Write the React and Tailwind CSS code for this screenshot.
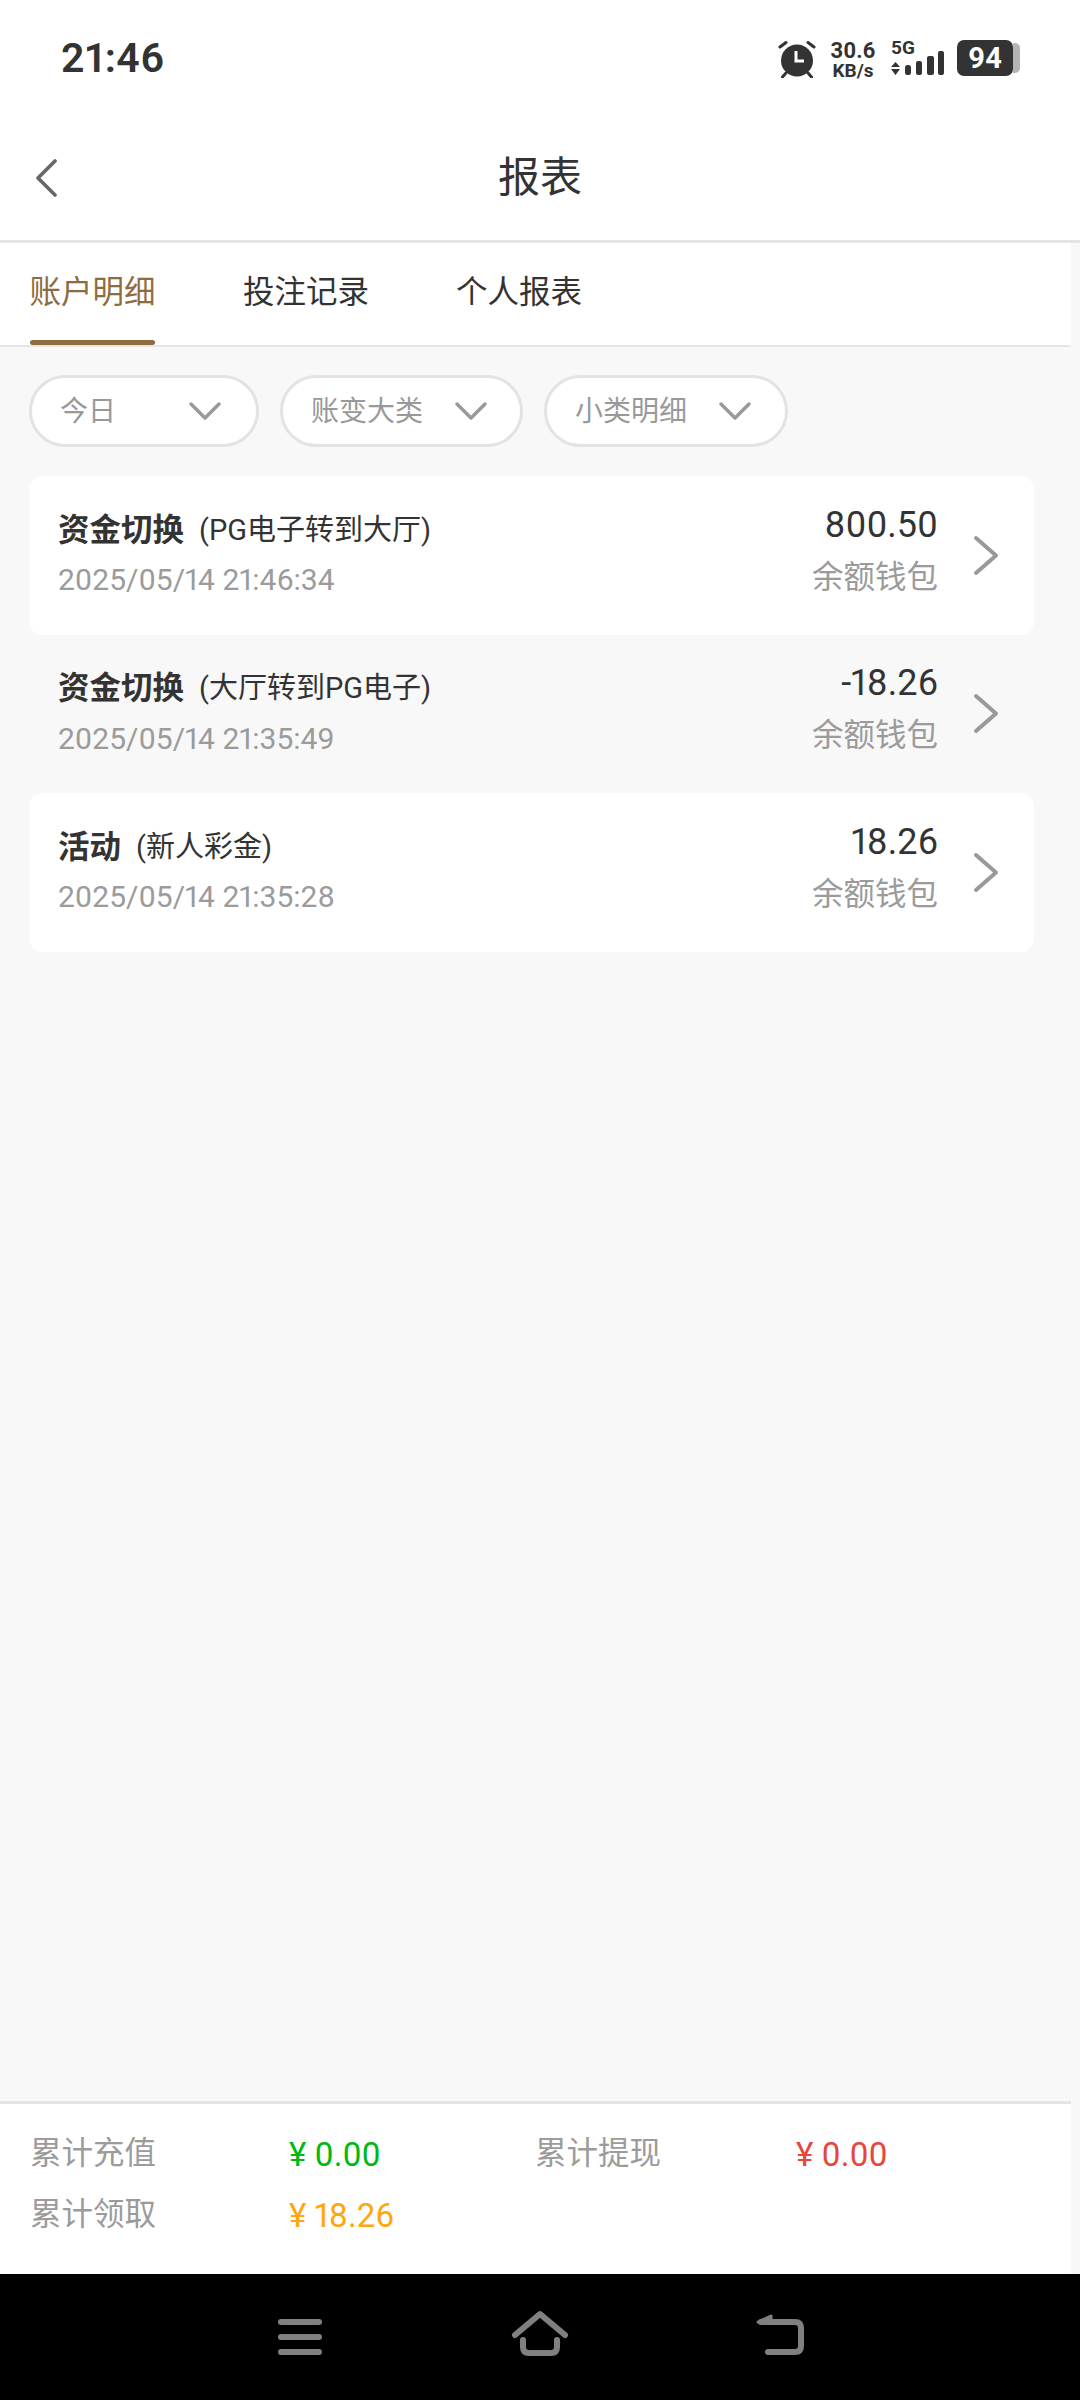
const FONT = "font-['Roboto','Noto_Sans_CJK_SC',sans-serif]";

function Chevron({ className }) {
  return (
    <svg viewBox="0 0 26 42" className={className} fill="none" stroke="#999999" strokeWidth="4" strokeLinecap="round" strokeLinejoin="round">
      <path d="M3 3 L23 20.5 L3 38" />
    </svg>
  );
}

function Chip({ label, width, gap }) {
  return (
    <div className={`flex h-[72px] items-center rounded-full border-[3px] border-[#e3e3e3] bg-white pl-[28px] ${width}`}>
      <span className="pt-[2px] text-[28px] leading-none text-[#999999]">{label}</span>
      <svg viewBox="0 0 32 20" className={`h-[20px] w-[32px] ${gap}`} fill="none" stroke="#999999" strokeWidth="3.4" strokeLinecap="round" strokeLinejoin="round">
        <path d="M2 3 L16 17 L30 3" />
      </svg>
    </div>
  );
}

function Row({ title, sub, time, amount, white }) {
  return (
    <div className={`flex h-[158.5px] items-center rounded-[14px] pl-[29px] pr-[35px] ${white ? "bg-white" : ""}`}>
      <div className="mb-[3px] flex-1">
        <div className="flex h-[40px] items-center text-[#333333]">
          <span className="text-[31.5px] font-bold leading-none">{title}</span>
          <span className="ml-[15px] text-[29px] leading-none">{sub}</span>
        </div>
        <div className="mt-[13px] text-[30px] leading-[34px] text-[#9b9b9b]">{time}</div>
      </div>
      <div className="mb-[10px] mr-[-1px] text-right">
        <div className="text-[36px] leading-[40px] text-[#333333]">{amount}</div>
        <div className="mt-[15px] text-[31.5px] leading-[36px] text-[#9b9b9b]">余额钱包</div>
      </div>
      <Chevron className="ml-[36px] mt-[1px] h-[42px] w-[26px]" />
    </div>
  );
}

function Sum({ color, value }) {
  return <span className={`ml-[1px] text-[33px] leading-none ${color}`}>¥ {value}</span>;
}

export default function App() {
  return (
    <div className={`proportional-nums flex h-[2400px] w-[1080px] flex-col bg-[#f8f8f8] ${FONT}`}>
      {/* status bar */}
      <div className="flex h-[116px] w-full items-start justify-between bg-white pl-[61px] pr-[60px] pt-[36px]">
        <span className="text-[41px] font-semibold leading-[44px] tracking-[0.5px] text-[#333333]">21:46</span>
        <div className="flex items-start pt-[4px]">
          <svg viewBox="0 0 38 38" className="h-[38px] w-[38px]" fill="#333333">
            <circle cx="19" cy="20.5" r="16" />
            <path d="M2 7 L8 2.5 M36 7 L30 2.5 M8 33 L4.5 37 M30 33 L33.5 37" stroke="#333333" strokeWidth="3" strokeLinecap="round" />
            <path d="M18 11 V21 H26" stroke="#ffffff" strokeWidth="3" fill="none" />
          </svg>
          <div className="ml-[13px] flex w-[48px] flex-col items-center font-bold leading-none text-[#333333]">
            <span className="text-[22px] leading-[21px]">30.6</span>
            <span className="text-[19px] leading-[19px]">KB/s</span>
          </div>
          <div className="ml-[14px] flex w-[54px] flex-col">
            <span className="text-[19px] font-bold leading-[16px] text-[#333333]">5G</span>
            <svg viewBox="0 0 53 24" className="mt-[-5px] h-[24px] w-[53px]" fill="#333333">
              <path d="M4.5 11 L9 16 H0 Z M4.5 24 L9 18 H0 Z" />
              <rect x="14" y="14" width="6" height="10" rx="2.5" />
              <rect x="25" y="10" width="6" height="14" rx="2" />
              <rect x="36" y="5" width="7" height="19" rx="2" />
              <rect x="47" y="0" width="6" height="24" rx="2" />
            </svg>
          </div>
          <div className="ml-[12px] flex items-center">
            <div className="flex h-[36px] w-[56px] items-center justify-center rounded-[7px] bg-[#333333] text-[29px] font-bold leading-none text-white">94</div>
            <div className="h-[30px] w-[7px] rounded-r-[5px] bg-[#b5b5b5]" />
          </div>
        </div>
      </div>

      {/* header */}
      <div className="relative flex h-[124px] w-full items-center justify-center bg-white">
        <svg viewBox="0 0 24 38" className="absolute left-[35px] top-[43px] h-[38px] w-[24px]" fill="none" stroke="#666666" strokeWidth="3.6" strokeLinecap="round" strokeLinejoin="round">
          <path d="M20 2 L3 19 L20 36" />
        </svg>
        <span className="text-[42px] leading-none text-[#333333]">报表</span>
      </div>
      <div className="h-[3px] w-full bg-[#e4e4e4]" />

      {/* tabs */}
      <div className="flex h-[102px] w-[1071px] shrink-0 items-stretch bg-white pl-[30px]">
        <div className="relative flex w-[125px] items-center justify-center pb-[3px] text-[31.5px] leading-none text-[#8f6c3f]">
          <span className="whitespace-nowrap">账户明细</span>
          <span className="absolute bottom-0 left-0 h-[5px] w-[125px] rounded-full bg-[#8f6c3f]" />
        </div>
        <div className="ml-[88px] flex items-center pb-[3px] text-[31.5px] leading-none text-[#333333]">投注记录</div>
        <div className="ml-[87px] flex items-center pb-[3px] text-[31.5px] leading-none text-[#333333]">个人报表</div>
      </div>
      <div className="h-[2px] w-[1071px] bg-[#e6e6e6]" />

      {/* filters */}
      <div className="flex gap-[21px] pl-[29px] pt-[28px]">
        <Chip label="今日" width="w-[230px]" gap="ml-[73px]" />
        <Chip label="账变大类" width="w-[243px]" gap="ml-[32px]" />
        <Chip label="小类明细" width="w-[244px]" gap="ml-[32px]" />
      </div>

      {/* list */}
      <div className="mt-[29px] flex w-[1034px] flex-col pl-[29px]">
        <Row white title="资金切换" sub="(PG电子转到大厅)" time="2025/05/14 21:46:34" amount="800.50" />
        <Row title="资金切换" sub="(大厅转到PG电子)" time="2025/05/14 21:35:49" amount="-18.26" />
        <Row white title="活动" sub="(新人彩金)" time="2025/05/14 21:35:28" amount="18.26" />
      </div>

      <div className="flex-1" />

      {/* footer */}
      <div className="h-[3px] w-[1071px] bg-[#e4e4e4]" />
      <div className="grid h-[170px] w-[1071px] grid-cols-[258px_247px_260px_1fr] content-start gap-y-[19px] bg-white pl-[30px] pt-[29px]">
        <span className="text-[31.5px] leading-[42px] text-[#9b9b9b]">累计充值</span>
        <div className="flex items-center"><Sum color="text-[#00b80f]" value="0.00" /></div>
        <span className="text-[31.5px] leading-[42px] text-[#9b9b9b]">累计提现</span>
        <div className="flex items-center"><Sum color="text-[#e8453c]" value="0.00" /></div>
        <span className="text-[31.5px] leading-[42px] text-[#9b9b9b]">累计领取</span>
        <div className="flex items-center"><Sum color="text-[#ffa60d]" value="18.26" /></div>
      </div>

      {/* nav bar */}
      <div className="flex h-[126px] w-full items-center justify-center bg-black">
        <svg viewBox="0 0 1080 126" className="h-[126px] w-[1080px]" fill="none" stroke="#808080" strokeWidth="6" strokeLinecap="round" strokeLinejoin="round">
          <path d="M281 48 H319 M281 63 H319 M281 78 H319" />
          <path d="M515 61 L540 40 L565 61 M523 66 V73 Q523 79 529 79 H551 Q557 79 557 73 V66" />
          <path d="M761 48 H795 Q801 48 801 54 V72 Q801 78 795 78 H768" />
          <path d="M758 48 L771 42 V48 Z" fill="#808080" strokeWidth="3" />
        </svg>
      </div>
    </div>
  );
}
